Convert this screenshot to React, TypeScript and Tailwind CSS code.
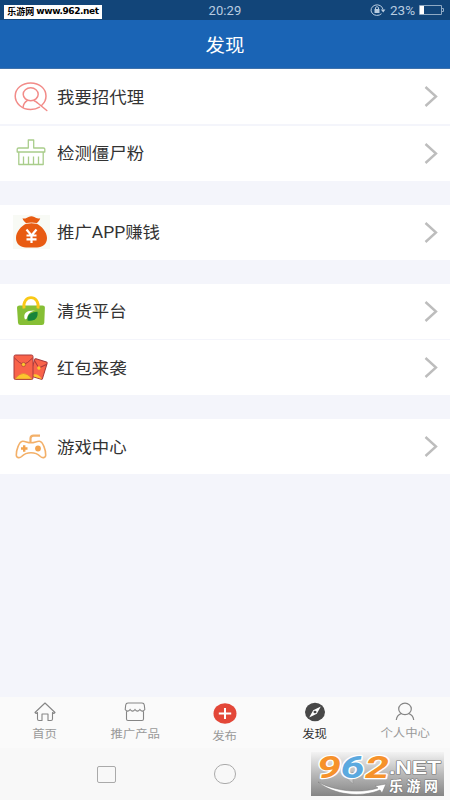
import type { ReactNode } from "react";

function AgentIcon() {
  return (
    <svg width="34" height="30" viewBox="0 0 34 30" fill="none" stroke="#f28b88" strokeWidth="1.5" strokeLinecap="round">
      <path d="M23 20.500l9.800 8M28 23c2.700-2.500 4-5.500 4-9C32 6.800 25.500 1 16.700 1S1.200 6.800 1.200 14s6.600 13.500 15.500 13.500c3.300 0 6.400-.8 8.800-2.300" />
      <ellipse cx="16.700" cy="12.300" rx="7.500" ry="6.500" />
      <path d="M9 25.500c.4-3 1.700-5.300 4.200-6.800M20.200 18.700c1.100.5 2.100 1.100 2.800 1.800" />
    </svg>
  );
}

function BroomIcon() {
  return (
    <svg width="30" height="28" viewBox="0 0 30 28" fill="none" stroke="#a9cd8b" strokeWidth="1.3" strokeLinejoin="round">
      <path d="M12.300 9V1h5.400v8h9.600q1.500 0 1.500 1V13H1.200v-3Q1.200 9 2.700 9z" />
      <path d="M2.800 13v12.500h24.400V13M7.500 17.500v8M12.500 17.500v8M17.500 17.500v8M22.500 17.500v8" />
    </svg>
  );
}

function MoneyBagIcon() {
  return (
    <svg width="37" height="34" viewBox="0 0 37 34">
      <path fill="#f8faf5" d="M0 0h37v34H0z" />
      <path
        fill="#e85b12"
        d="M9.500 3.300c2.500.8 4.200-.3 6-1.300 1.900-1 3.900-1 5.800 0 1.700 1 3.400 2 5.900 1.200-.7 2.500-2.200 4-4 5.300 5.500 2.500 10.800 8.500 10.800 14.500 0 6-4.500 9.500-10 9.500H13C7.500 32.500 3 29 3 23 3 17 8 11 13.700 8.500c-1.800-1.300-3.500-2.700-4.200-5.200z"
      />
      <path d="M13 8.600q5.500-1.500 11 0" stroke="#f9d6bf" strokeWidth="1" fill="none" />
      <path d="M13.500 14.500l5 6 5-6M18.500 20.500v7.500M13.500 20.500h10M13.500 24.300h10" fill="none" stroke="#fff" strokeWidth="2.200" />
    </svg>
  );
}

function ShoppingBagIcon() {
  return (
    <svg width="30" height="30" viewBox="0 0 30 30">
      <path fill="#86bf35" d="M3.500 9.500h23q2.500 0 2.400 2L28.300 26.800q-.2 2.200-2.400 2.200H4.400Q2.200 29 2 26.800L1 11.500q0-2 2.500-2z" />
      <path d="M8 12.500C5.800-2 24.200-2 22 12.500" fill="none" stroke="#fac916" strokeWidth="2.800" />
      <path d="M9 23.500c-2.500-6.500 2-9.500 10.500-9-5 .8-7.500 3-8.500 8z" fill="#fff" />
      <path d="M11.500 24.500c-.5-5.500 3-8.500 10-8.700.8 6.200-2.500 9.900-10 8.700z" fill="#17843a" />
    </svg>
  );
}

function RedPacketIcon() {
  return (
    <svg width="36" height="27" viewBox="0 0 36 27" strokeLinejoin="round">
      <g stroke="#a83a3c" strokeWidth="1">
        <g transform="translate(22 4.500) rotate(17)">
          <rect width="13" height="18" rx="1" fill="#f9634a" />
          <path d="M.5 17.500q6-5.500 12 0z" fill="#fcc52e" stroke="none" />
          <path d="M0 2l6.500 6L13 2" fill="none" />
          <circle cx="6.500" cy="8" r="1.700" fill="#fcc52e" stroke="none" />
        </g>
        <rect x="1" y="1" width="19" height="24.500" rx="1.500" fill="#f9634a" />
        <path d="M2 25q8.500-11 17 0z" fill="#fcc52e" stroke="#d98632" strokeWidth=".6" />
        <path d="M1.500 4q5 5.500 9 6.500 4-1 9-6.500" fill="none" />
        <circle cx="10.500" cy="10.500" r="2.100" fill="#fcc52e" strokeWidth=".6" />
      </g>
    </svg>
  );
}

function GamepadIcon() {
  return (
    <svg width="32" height="25" viewBox="0 0 32 25" fill="none" stroke="#f3b069" strokeWidth="1.600">
      <path d="M16 8.800c4 0 5.500-1.800 8.500-1.500 3.500.4 6.400 9.200 6.200 13.700 0 3.200-3.500 3.200-5.300 1.500-2.700-2.700-5-3.700-9.400-3.700s-6.700 1-9.400 3.700c-1.800 1.700-5.300 1.700-5.300-1.500C1.100 16.500 4 7.700 7.500 7.300c3-.3 4.500 1.500 8.500 1.500z" />
      <path d="M15.500 8V4.500q0-2.800 3-2.800H25" strokeWidth="2.200" />
      <path d="M6 14.500h6.500M9.200 11.200v6.600" stroke="#f3a44f" strokeWidth="2.400" />
      <circle cx="23" cy="14.500" r="2.900" fill="#f3a44f" stroke="none" />
    </svg>
  );
}

interface MenuRowProps {
  icon: ReactNode;
  label: string;
}

function MenuRow({ icon, label }: MenuRowProps) {
  return (
    <div className="flex h-[55px] items-center bg-white pr-3">
      <div className="flex w-[56.500px] justify-center pl-[5.500px]">{icon}</div>
      <div className="flex-1">
        <span className="inline-block origin-left scale-x-[1.07] font-[Roboto,'Noto_Sans_CJK_SC',sans-serif] text-[16.300px] leading-6 text-[#333]">
          {label}
        </span>
      </div>
      <svg width="14" height="21" viewBox="0 0 14 21" fill="none" stroke="#bdbdbd" strokeWidth="2.400">
        <path d="M1.500 1l10.500 9.500L1.500 20" />
      </svg>
    </div>
  );
}

const groups = [
  [
    { icon: <AgentIcon />, label: "我要招代理" },
    { icon: <BroomIcon />, label: "检测僵尸粉" },
  ],
  [{ icon: <MoneyBagIcon />, label: "推广APP赚钱" }],
  [
    { icon: <ShoppingBagIcon />, label: "清货平台" },
    { icon: <RedPacketIcon />, label: "红包来袭" },
  ],
  [{ icon: <GamepadIcon />, label: "游戏中心" }],
];

const tabs = [
  {
    label: "首页",
    style: "pt-[5px] text-[#999]",
    icon: (
      <svg width="22" height="20" viewBox="0 0 22 20" fill="none" stroke="#858585" strokeWidth="1.100" strokeLinejoin="round">
        <path d="M1 10.500L11 1l10 9.500-1.200 1-1.300-1V17q0 1.500-1.500 1.500h-3V12H8v6.500H5Q3.500 18.500 3.500 17v-6.500l-1.300 1z" />
      </svg>
    ),
  },
  {
    label: "推广产品",
    style: "pt-[5px] text-[#999]",
    icon: (
      <svg width="22" height="20" viewBox="0 0 22 20" fill="none" stroke="#858585" strokeWidth="1.100">
        <path d="M4 1h14q2 0 2.300 2l.5 4.500q-2.400 3.300-4.900 0-2.500 3.300-4.900 0-2.400 3.300-4.900 0-2.500 3.300-4.900 0L1.700 3Q2 1 4 1zM2.500 9.500V17q0 1.500 1.500 1.500h14q1.500 0 1.500-1.500V9.500" />
      </svg>
    ),
  },
  {
    label: "发布",
    style: "pt-[6px] text-[#999]",
    icon: (
      <svg width="24" height="21" viewBox="0 0 24 21">
        <ellipse cx="12" cy="10.500" rx="11.500" ry="10.300" fill="#e34738" />
        <path d="M12 5v11M5.800 10.500h12.400" stroke="#fff" strokeWidth="2" />
      </svg>
    ),
  },
  {
    label: "发现",
    style: "pt-[5px] text-[#333]",
    icon: (
      <svg width="20" height="20" viewBox="0 0 20 20">
        <ellipse cx="10" cy="10" rx="10" ry="9.200" fill="#484848" />
        <path d="M15.800 4.500l-4 7.300-7.600 3.700 4-7.300z" fill="#fff" />
        <ellipse cx="10" cy="10" rx="1.500" ry="1.300" fill="#484848" />
      </svg>
    ),
  },
  {
    label: "个人中心",
    style: "pt-[4px] text-[#999]",
    icon: (
      <svg width="20" height="20" viewBox="0 0 20 20" fill="none" stroke="#858585" strokeWidth="1.200">
        <ellipse cx="10" cy="7.900" rx="6.300" ry="5.700" />
        <path d="M1.300 19c.3-3.300 2.200-5.500 5.200-6.500M18.700 19c-.3-3.300-2.200-5.500-5.200-6.500" />
      </svg>
    ),
  },
];

function StatusBar() {
  return (
    <div className="relative flex h-5 items-center justify-end bg-[#124579] pr-[6px] text-[#b9cce0]">
      <span className="absolute left-1/2 top-[1px] -translate-x-1/2 font-[Roboto] text-[13px] leading-5 tracking-[0.1px]">20:29</span>
      <div className="absolute left-1 top-[5px] flex h-[14px] w-[98px] items-center justify-center whitespace-nowrap bg-white text-[9px] font-bold text-black">
        <span>乐游网&nbsp;</span>
        <span className="font-['DejaVu_Sans'] text-[9px] tracking-[-0.4px]">www.962.net</span>
      </div>
      <svg width="16" height="12" viewBox="0 0 16 12" fill="none" stroke="currentColor">
        <path d="M11.500 9.700A6 5.300 0 1 1 13 5.500" />
        <path d="M10.800 5.500h4.600L13.200 8.500z" fill="currentColor" stroke="none" />
        <path d="M4.500 5h5v4h-5z" fill="currentColor" stroke="none" />
        <path d="M5.500 5V3.500q1.500-1.800 3 0V5" />
      </svg>
      <span className="ml-1 w-[27px] font-[Roboto] text-[13.500px]">23%</span>
      <svg className="ml-[1px]" width="26" height="12" viewBox="0 0 26 12">
        <path d="M1.500 1.500h22v9h-22zM24 4.500h1.500v3H24" fill="none" stroke="#90aac4" />
        <path d="M2 2h4v8H2z" fill="#fff" />
      </svg>
    </div>
  );
}

function Watermark() {
  return (
    <svg className="absolute left-[311px] top-[4px]" width="133" height="44" viewBox="0 0 133 44">
      <defs>
        <linearGradient id="plate" x2="0" y2="1">
          <stop offset="0" stopColor="#f3f3f3" />
          <stop offset=".5" stopColor="#b9b9b9" />
          <stop offset="1" stopColor="#858585" />
        </linearGradient>
      </defs>
      <path fill="url(#plate)" d="M0 0h133v44H0z" />
      <path d="M34 25l8-5v12z" fill="#c3c3c3" stroke="#999" strokeWidth=".7" />
      <path d="M7 30c17 9 41 12 60 6l-3-2 11-2-4 9-2-3C50 46 23 43 7 30z" fill="#fff" stroke="#777" strokeWidth=".5" />
      <g fontWeight="700" stroke="#fff" paintOrder="stroke" strokeLinejoin="round">
        <g fontFamily="Roboto, sans-serif" fontSize="32" fontStyle="italic" strokeWidth="2.400">
          <text x="6" y="26" textLength="24" lengthAdjust="spacingAndGlyphs" fill="#f6922b">9</text>
          <text x="29.500" y="26" textLength="24" lengthAdjust="spacingAndGlyphs" fill="#5ba9df">6</text>
          <text x="54" y="26" textLength="24" lengthAdjust="spacingAndGlyphs" fill="#f6922b">2</text>
        </g>
        <g fill="#fff" stroke="#777" strokeWidth="1.200">
          <text x="78" y="22" fontSize="19" textLength="52" lengthAdjust="spacingAndGlyphs" fontFamily="Liberation Sans, sans-serif">.NET</text>
          <text x="78" y="39" fontSize="14" textLength="49" fontFamily="Noto Sans CJK SC, sans-serif">乐游网</text>
        </g>
      </g>
    </svg>
  );
}

export default function App() {
  return (
    <div className="flex h-[800px] w-[450px] flex-col overflow-hidden bg-[#f4f5fb] font-['Noto_Sans_CJK_SC',sans-serif]">
      <StatusBar />
      <header className="flex h-[49px] items-center justify-center border-b border-[#3f72ac] bg-[#1a64b5] text-[18px] text-white">
        <span className="inline-block scale-x-[1.08]">发现</span>
      </header>

      <main className="flex flex-1 flex-col gap-[24px]">
        {groups.map((rows) => (
          <section key={rows[0].label} className="flex flex-col gap-[1.500px]">
            {rows.map((row) => (
              <MenuRow key={row.label} icon={row.icon} label={row.label} />
            ))}
          </section>
        ))}
      </main>

      <nav className="grid h-[51px] grid-cols-5 bg-[#fafafa]">
        {tabs.map((tab) => (
          <div key={tab.label} className={`flex flex-col items-center text-[11.600px] leading-[23px] ${tab.style}`}>
            {tab.icon}
            <span className="inline-block scale-x-[1.07]">{tab.label}</span>
          </div>
        ))}
      </nav>

      <div className="relative flex h-[52px] items-center bg-[#f8f8f8]">
        <div className="ml-[97px] h-[17px] w-[19px] rounded-[2px] border border-[#aaa]" />
        <div className="ml-[98px] h-5 w-[22px] rounded-full border border-[#aaa]" />
        <Watermark />
      </div>
    </div>
  );
}
